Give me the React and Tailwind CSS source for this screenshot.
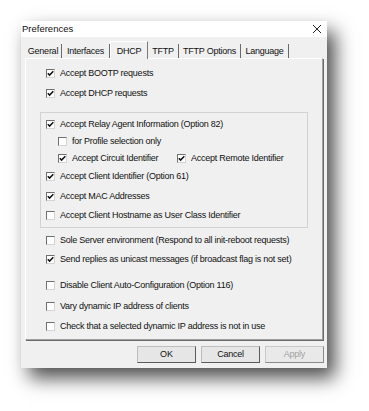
import React from 'react';

const Box = ({ checked }) => (
  <span className="w-[9px] h-[9px] bg-white border border-t-[#6f6f6f] border-l-[#6f6f6f] border-r-[#d4d4d4] border-b-[#d4d4d4] flex items-center justify-center shrink-0">
    {checked && (
      <svg width="7" height="7" viewBox="0 0 7 7">
        <path d="M0.8 3.2 L2.6 5.1 L6.3 1.2" stroke="#111" strokeWidth="1.5" fill="none" />
      </svg>
    )}
  </span>
);

const Check = ({ checked, label, className = '' }) => (
  <div className={`flex items-center h-[12px] gap-[5px] ${className}`}>
    <Box checked={checked} />
    <span className="whitespace-nowrap">{label}</span>
  </div>
);

const tabs = [
  { name: 'General', w: 'w-[37px]' },
  { name: 'Interfaces', w: 'w-[48px]' },
  { name: 'DHCP', w: 'w-[38px]', active: true },
  { name: 'TFTP', w: 'w-[31px]' },
  { name: 'TFTP Options', w: 'w-[62px]' },
  { name: 'Language', w: 'w-[48px]' },
];

export default function App() {
  return (
    <div className="w-[369px] h-[411px] bg-white pt-[21px] pl-[21px] font-['Liberation_Sans',Arial,sans-serif] text-[9px] tracking-[-0.25px] text-[#111] leading-none">
      <div className="w-[306px] h-[347px] bg-[#f0f0f0] shadow-[8px_10px_18px_rgba(0,0,0,0.7)] flex flex-col">
        {/* title bar */}
        <div className="h-[16px] bg-white flex items-center justify-between pl-[1px] pr-[5px]">
          <span className="tracking-normal text-[9.5px]">Preferences</span>
          <svg width="10" height="10" viewBox="0 0 10 10">
            <path d="M1 1 L9 9 M9 1 L1 9" stroke="#222" strokeWidth="1" />
          </svg>
        </div>

        <div className="px-[4px]">
          {/* tabs */}
          <div className="h-[21px] flex items-end">
            {tabs.map((t) =>
              t.active ? (
                <div
                  key={t.name}
                  className={`${t.w} h-[18px] -mb-[1px] relative z-10 bg-[#f0f0f0] border-t border-l border-white border-r border-r-[#7a7a7a] flex items-start justify-center pt-[5px]`}
                >
                  {t.name}
                </div>
              ) : (
                <div
                  key={t.name}
                  className={`${t.w} h-[14px] border-r border-r-[#6a6a6a] flex items-center justify-center`}
                >
                  {t.name}
                </div>
              )
            )}
          </div>

          {/* panel */}
          <div className="h-[282px] border border-t-white border-l-white border-r-[#a0a0a0] border-b-[#a0a0a0] shadow-[1px_1px_0_#6a6a6a] pt-[8px] pl-[20px]">
            <Check checked label="Accept BOOTP requests" />
            <Check checked label="Accept DHCP requests" className="mt-[8px]" />

            <div className="mt-[13px] -ml-[6px] w-[268px] border border-[#d2d2d2] pt-[5px] pl-[5px] pb-[6px]">
              <Check checked label="Accept Relay Agent Information (Option 82)" />
              <Check label="for Profile selection only" className="mt-[5px] ml-[12px]" />
              <div className="flex mt-[5px] ml-[12px]">
                <Check checked label="Accept Circuit Identifier" className="w-[119px]" />
                <Check checked label="Accept Remote Identifier" />
              </div>
              <Check checked label="Accept Client Identifier (Option 61)" className="mt-[6px]" />
              <Check checked label="Accept MAC Addresses" className="mt-[8px]" />
              <Check label="Accept Client Hostname as User Class Identifier" className="mt-[7px]" />
            </div>

            <Check label="Sole Server environment (Respond to all init-reboot requests)" className="mt-[6px]" />
            <Check checked label="Send replies as unicast messages (if broadcast flag is not set)" className="mt-[7px]" />
            <Check label="Disable Client Auto-Configuration (Option 116)" className="mt-[14px]" />
            <Check label="Vary dynamic IP address of clients" className="mt-[9px]" />
            <Check label="Check that a selected dynamic IP address is not in use" className="mt-[8px]" />
          </div>
        </div>

        {/* buttons */}
        <div className="mt-[6px] flex justify-end gap-[5px] pr-[3px]">
          <button className="w-[59px] h-[17px] bg-[#e6e6e6] border border-t-[#bdbdbd] border-l-[#bdbdbd] border-r-[#5a5a5a] border-b-[#5a5a5a] tracking-normal">
            OK
          </button>
          <button className="w-[59px] h-[17px] bg-[#e6e6e6] border border-t-[#bdbdbd] border-l-[#bdbdbd] border-r-[#5a5a5a] border-b-[#5a5a5a] tracking-[-0.25px]">
            Cancel
          </button>
          <button className="w-[59px] h-[17px] bg-[#e9e9e9] border border-t-[#c8c8c8] border-l-[#c8c8c8] border-r-[#8a8a8a] border-b-[#8a8a8a] text-[#a3a3a3]">
            Apply
          </button>
        </div>
      </div>
    </div>
  );
}
